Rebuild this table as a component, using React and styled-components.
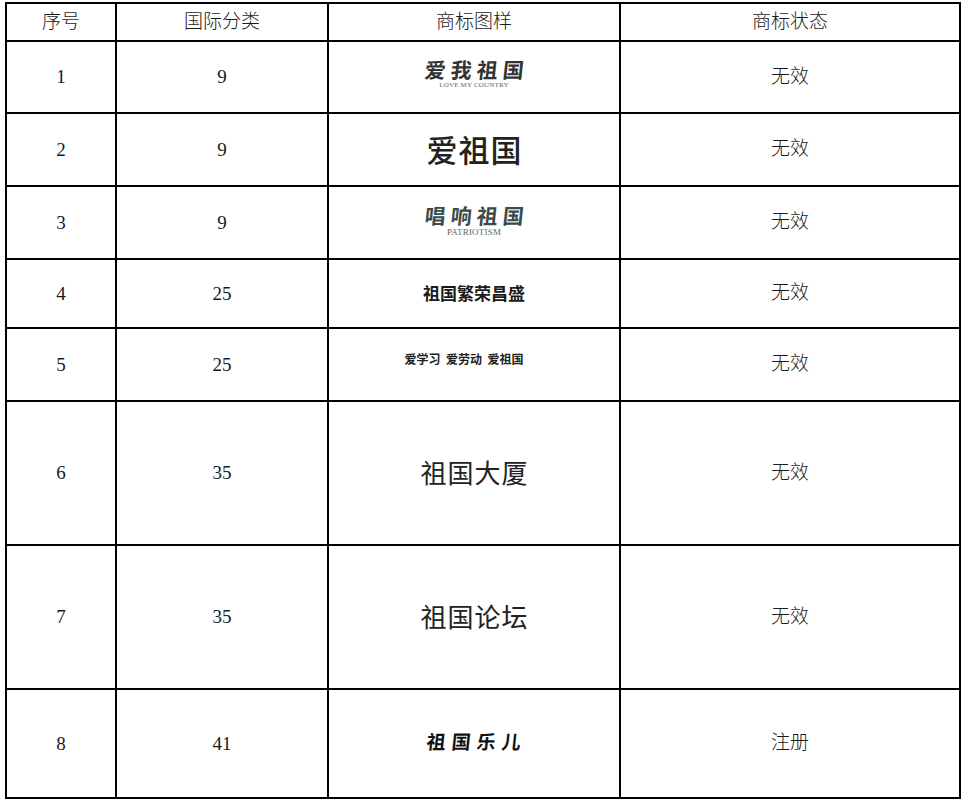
import React from "react";
import styled, { createGlobalStyle } from "styled-components";

const Global = createGlobalStyle`
  html, body { margin: 0; padding: 0; background: #fff; }
  body { font-family: "Liberation Serif", "Noto Sans CJK SC", serif; color: #111; }
`;

const Page = styled.div`
  padding: 2px 0 0 5px;
`;

const Table = styled.table`
  border-collapse: collapse;
  table-layout: fixed;
  width: 954px;
`;

const Col = styled.col`
  width: ${(p) => p.$w}px;
`;

const Row = styled.tr`
  height: ${(p) => p.$h}px;
`;

const HeadCell = styled.th`
  border: 2px solid #000;
  font-weight: 300;
  font-size: 19px;
  font-family: "Liberation Serif", "Noto Sans CJK SC", serif;
  text-align: center;
  vertical-align: middle;
  padding: 0 0 5px;
  color: #1a1a1a;
`;

const Cell = styled.td`
  border: 2px solid #000;
  font-size: 19px;
  font-weight: 300;
  text-align: center;
  vertical-align: middle;
  padding: 0 0 ${(p) => (p.$zh ? 6 : 0)}px;
  color: #1a1a1a;
`;

const Logo = styled.div`
  display: inline-flex;
  flex-direction: column;
  align-items: center;
  line-height: 1;
  padding-bottom: ${(p) => p.$pb || 0}px;
  padding-right: ${(p) => p.$pr || 0}px;
`;

const LogoText = styled.span`
  font-family: "Noto Sans CJK SC", sans-serif;
  font-size: ${(p) => p.$size}px;
  font-weight: ${(p) => p.$weight || 400};
  letter-spacing: ${(p) => p.$ls || 0}px;
  margin-right: -${(p) => p.$ls || 0}px;
  color: ${(p) => p.$color || "#111"};
  white-space: pre;
  ${(p) => (p.$skew ? "transform: skewX(-6deg);" : "")}
`;

const SubText = styled.span`
  font-family: "Liberation Serif", serif;
  font-size: ${(p) => p.$size}px;
  color: #666;
  margin-top: 2px;
  letter-spacing: 0.2px;
`;

const rows = [
  { n: "1", c: "9", h: 72, s: "无效", logo: (
    <Logo $pb={6}>
      <LogoText $size={21} $weight={700} $ls={5} $color="#333" $skew>爱我祖国</LogoText>
      <SubText $size={7}>LOVE MY COUNTRY</SubText>
    </Logo>
  ) },
  { n: "2", c: "9", h: 73, s: "无效", logo: (
    <Logo $pb={2}><LogoText $size={31} $weight={500} $ls={1} $color="#222">爱祖国</LogoText></Logo>
  ) },
  { n: "3", c: "9", h: 73, s: "无效", logo: (
    <Logo $pb={4}>
      <LogoText $size={21} $weight={700} $ls={5} $color="#3d4a4a" $skew>唱响祖国</LogoText>
      <SubText $size={9}>PATRIOTISM</SubText>
    </Logo>
  ) },
  { n: "4", c: "25", h: 69, s: "无效", logo: (
    <Logo><LogoText $size={17} $weight={700} $color="#1a1a1a">祖国繁荣昌盛</LogoText></Logo>
  ) },
  { n: "5", c: "25", h: 73, s: "无效", logo: (
    <Logo $pb={18} $pr={20}><LogoText $size={12} $weight={700} $color="#222">{"爱学习  爱劳动  爱祖国"}</LogoText></Logo>
  ) },
  { n: "6", c: "35", h: 144, s: "无效", logo: (
    <Logo><LogoText $size={26} $weight={400} $ls={1} $color="#222">祖国大厦</LogoText></Logo>
  ) },
  { n: "7", c: "35", h: 144, s: "无效", logo: (
    <Logo><LogoText $size={26} $weight={400} $ls={1} $color="#222">祖国论坛</LogoText></Logo>
  ) },
  { n: "8", c: "41", h: 109, s: "注册", logo: (
    <Logo $pb={6}><LogoText $size={19} $weight={700} $ls={6} $skew>祖国乐儿</LogoText></Logo>
  ) },
];

export default function App() {
  return (
    <Page>
      <Global />
      <Table>
        <colgroup>
          <Col $w={110} />
          <Col $w={212} />
          <Col $w={292} />
          <Col $w={340} />
        </colgroup>
        <thead>
          <Row $h={38}>
            <HeadCell>序号</HeadCell>
            <HeadCell>国际分类</HeadCell>
            <HeadCell>商标图样</HeadCell>
            <HeadCell>商标状态</HeadCell>
          </Row>
        </thead>
        <tbody>
          {rows.map((r) => (
            <Row key={r.n} $h={r.h}>
              <Cell>{r.n}</Cell>
              <Cell>{r.c}</Cell>
              <Cell>{r.logo}</Cell>
              <Cell $zh>{r.s}</Cell>
            </Row>
          ))}
        </tbody>
      </Table>
    </Page>
  );
}
